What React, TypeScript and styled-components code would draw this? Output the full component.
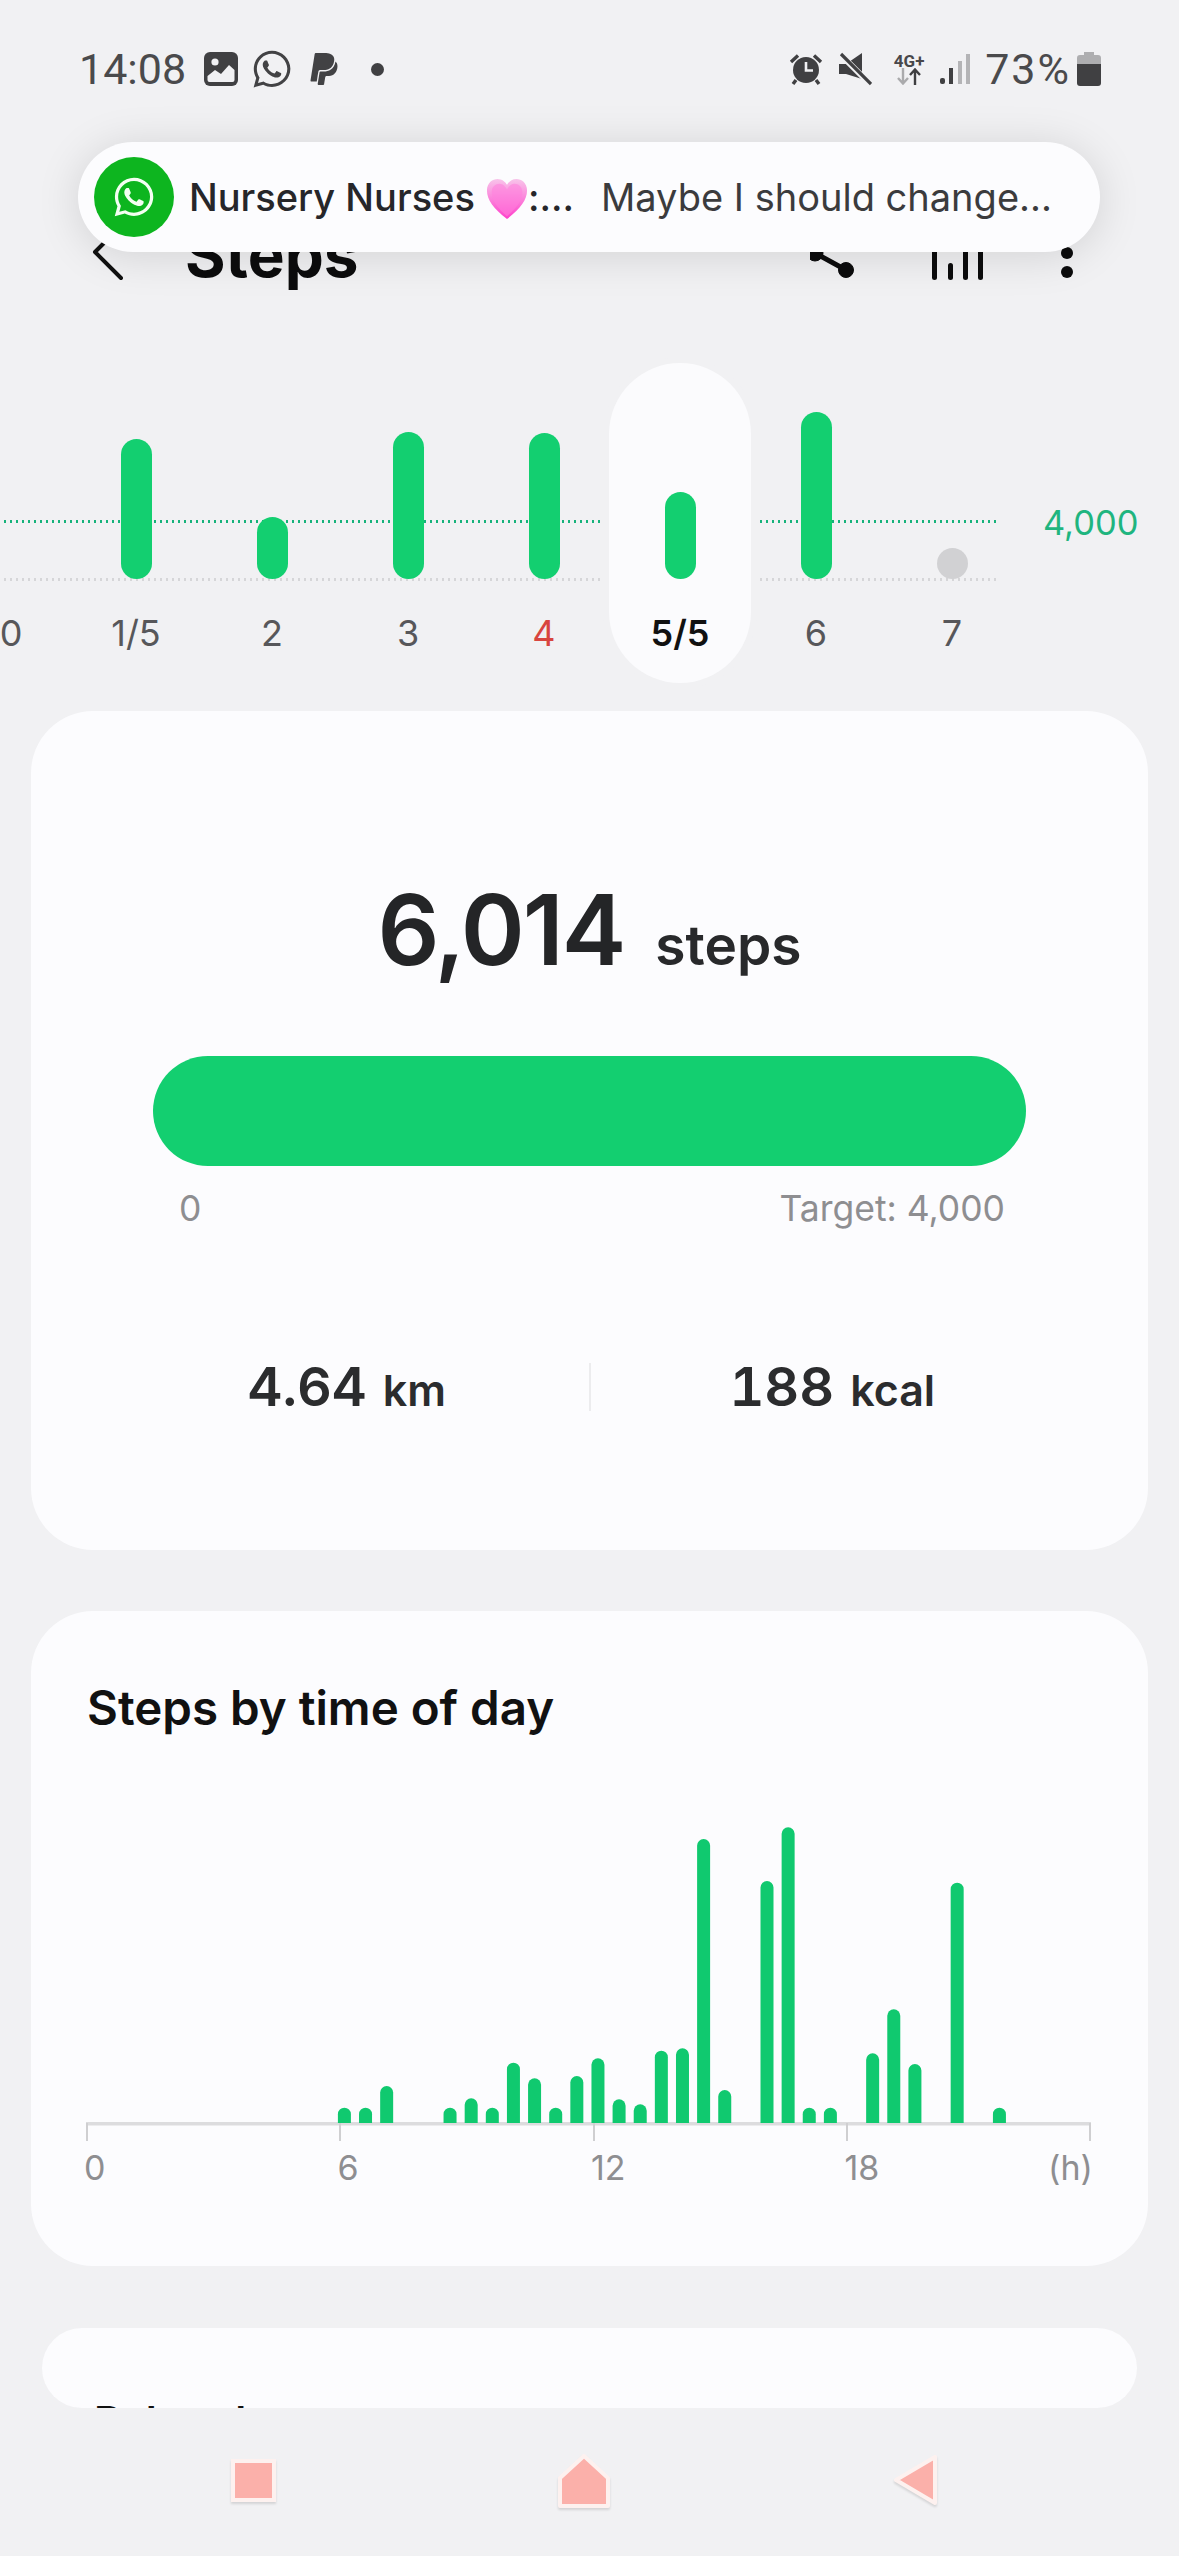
import React from "react";
import styled, { createGlobalStyle } from "styled-components";
import { FaWhatsapp, FaPaypal } from "react-icons/fa";

const Global = createGlobalStyle`
  html, body { margin: 0; padding: 0; background: #f1f1f3; }
  * { box-sizing: border-box; }
`;

const Page = styled.div`
  position: relative;
  width: 1179px;
  height: 2556px;
  overflow: hidden;
  background: #f1f1f3;
  font-family: Inter, "Noto Sans", sans-serif;
  color: #222;
`;

const StatusBar = styled.div`
  height: 100px;
  padding: 50px 78px 0 79px;
  display: flex;
  justify-content: space-between;
  align-items: flex-start;
  color: #404042;
`;
const StatusGroup = styled.div`
  display: flex;
  align-items: center;
  height: 38px;
`;
const StatusText = styled.span<{ $ml?: number; $track?: number }>`
  font-family: Roboto, sans-serif;
  font-size: 43px;
  line-height: 38px;
  font-weight: 400;
  letter-spacing: ${(p) => p.$track ?? 0}px;
  color: #4a4a4c;
  margin-left: ${(p) => p.$ml ?? 0}px;
`;
const StatusIcon = styled.svg<{ $ml: number }>`
  display: block;
  flex: none;
  margin-left: ${(p) => p.$ml}px;
`;
const NetworkLabel = styled.span`
  font-family: Roboto, sans-serif;
  font-size: 17px;
  line-height: 14px;
  font-weight: 700;
  color: #48484a;
  display: block;
  text-align: center;
`;
const NetworkBox = styled.div`
  width: 36px;
  margin-left: 19px;
  display: flex;
  flex-direction: column;
  align-items: center;
`;
const WaStatus = styled(FaWhatsapp)`
  flex: none;
  width: 42px;
  height: 42px;
  margin-left: 13px;
  color: #424244;
`;
const PayStatus = styled(FaPaypal)`
  flex: none;
  width: 30px;
  height: 36px;
  margin-left: 16px;
  color: #424244;
`;
const NoticeDot = styled.span`
  flex: none;
  width: 13px;
  height: 13px;
  border-radius: 50%;
  background: #404042;
  margin-left: 32px;
`;

const Banner = styled.div`
  position: absolute;
  left: 78px;
  top: 142px;
  width: 1022px;
  height: 110px;
  border-radius: 55px;
  background: #fcfcfe;
  box-shadow: 0 4px 44px rgba(0, 0, 0, 0.13);
  display: flex;
  align-items: center;
  padding-left: 16px;
  z-index: 5;
`;
const WaBadge = styled.div`
  flex: none;
  width: 80px;
  height: 80px;
  border-radius: 50%;
  background: #0db51f;
  color: #f4fff2;
  display: flex;
  align-items: center;
  justify-content: center;
  font-size: 44px;
`;
const BannerTitle = styled.span`
  margin-left: 15px;
  font-size: 38px;
  font-weight: 500;
  color: #26262a;
  white-space: nowrap;
`;
const BannerTrail = styled.span`
  font-size: 38px;
  font-weight: 500;
  color: #26262a;
`;
const BannerHeart = styled.svg`
  flex: none;
  margin-left: 11px;
  margin-top: 4px;
`;
const BannerMessage = styled.span`
  margin-left: 27px;
  font-size: 38px;
  font-weight: 400;
  color: #3b3b3d;
  white-space: nowrap;
`;

const Header = styled.header`
  position: relative;
  height: 110px;
  margin-top: 100px;
  display: flex;
  align-items: center;
  padding: 0 79px 0 92px;
`;
const BackIcon = styled.svg`
  flex: none;
  margin-bottom: 6px;
`;
const Title = styled.h1`
  margin: 0 0 0 59px;
  font-size: 62px;
  line-height: 74px;
  font-weight: 700;
  color: #0c0c0d;
`;
const HeaderActions = styled.svg`
  display: block;
  margin-left: auto;
  flex: none;
`;

const WeekStrip = styled.section`
  position: relative;
  height: 320px;
  margin-top: 53px;
  display: flex;
  align-items: flex-start;
  margin-left: -68px;
`;
const GuideLine = styled.div<{ $color: string; $top: number }>`
  position: absolute;
  left: 0;
  top: ${(p) => p.$top}px;
  width: 1064px;
  height: 3px;
  background-image: linear-gradient(to right, ${(p) => p.$color} 38%, transparent 0);
  background-size: 6px 3px;
`;
const Day = styled.div<{ $selected?: boolean }>`
  position: relative;
  flex: none;
  width: ${(p) => (p.$selected ? 142 : 136)}px;
  margin: 0 ${(p) => (p.$selected ? -3 : 0)}px;
  height: 320px;
  display: flex;
  flex-direction: column;
  align-items: center;
  border-radius: 71px;
  background: ${(p) => (p.$selected ? "#fbfbfd" : "transparent")};
  box-shadow: ${(p) => (p.$selected ? "0 0 0 6px #f1f1f3" : "none")};
`;
const BarSlot = styled.div`
  height: 216px;
  display: flex;
  align-items: flex-end;
`;
const DayBar = styled.div<{ $h: number; $muted?: boolean }>`
  width: 31px;
  height: ${(p) => p.$h}px;
  border-radius: 16px;
  background: ${(p) => (p.$muted ? "#d1d1d3" : "#13cf70")};
`;
const DayLabel = styled.span<{ $tone?: "red" | "strong" }>`
  margin-top: 34px;
  font-size: 36px;
  line-height: 40px;
  font-weight: ${(p) => (p.$tone === "strong" ? 600 : 400)};
  color: ${(p) =>
    p.$tone === "red" ? "#d8453f" : p.$tone === "strong" ? "#111" : "#57575a"};
`;
const GoalLabel = styled.span`
  position: relative;
  flex: none;
  margin: 140px 0 0 23px;
  font-size: 34.5px;
  line-height: 40px;
  color: #1fb57f;
`;

const Card = styled.section<{ $h: number; $gap: number }>`
  height: ${(p) => p.$h}px;
  margin: ${(p) => p.$gap}px 31px 0;
  border-radius: 62px;
  background: #fcfcfe;
`;
const MainCard = styled(Card)`
  padding: 169px 122px 0 122px;
`;
const TotalRow = styled.div`
  display: flex;
  justify-content: center;
  align-items: baseline;
  gap: 31px;
`;
const TotalValue = styled.span`
  font-size: 97px;
  line-height: 100px;
  font-weight: 600;
  letter-spacing: -2px;
  color: #242527;
`;
const TotalUnit = styled.span`
  font-size: 55px;
  font-weight: 600;
  color: #28292b;
`;
const Progress = styled.div`
  height: 110px;
  margin-top: 76px;
  border-radius: 55px;
  background: #13cf70;
`;
const ScaleRow = styled.div`
  display: flex;
  justify-content: space-between;
  margin-top: 23px;
  padding: 0 21px 0 26px;
  font-size: 35.5px;
  line-height: 40px;
  color: #8e8e91;
`;
const StatsRow = styled.div`
  display: flex;
  align-items: center;
  margin: 128px -48px 0;
`;
const Stat = styled.div`
  flex: 1;
  display: flex;
  justify-content: center;
  align-items: baseline;
  gap: 16px;
`;
const StatValue = styled.span`
  font-size: 54px;
  line-height: 60px;
  font-weight: 600;
  font-variant-numeric: tabular-nums;
  color: #2b2c2e;
`;
const StatUnit = styled.span`
  font-size: 43px;
  font-weight: 600;
  color: #2b2c2e;
`;
const StatDivider = styled.div`
  flex: none;
  width: 2px;
  height: 48px;
  background: #ececee;
`;

const CardTitle = styled.h2`
  margin: 0;
  padding: 69px 0 0 56px;
  font-size: 47.5px;
  line-height: 56px;
  font-weight: 600;
  color: #111;
`;
const ChartSvg = styled.svg`
  display: block;
  margin-top: 84px;
`;
const HourLabels = styled.div`
  display: flex;
  margin-top: 6px;
  padding: 0 55px 0 53px;
  font-size: 34px;
  line-height: 40px;
  color: #8e8e91;
`;
const HourTick = styled.span`
  flex: none;
  width: 253.5px;
`;
const HourLastTick = styled.span`
  flex: none;
  width: 190px;
`;
const HourUnit = styled.span`
  margin-left: auto;
`;

const PeekCard = styled.section`
  height: 80px;
  margin: 62px 42px 0;
  border-radius: 62px;
  background: #fcfcfe;
  overflow: hidden;
  padding: 69px 0 0 52px;
  font-size: 42px;
  line-height: 50px;
  font-weight: 600;
  color: #111;
`;

const NavBar = styled.nav`
  display: flex;
  gap: 270px;
  margin-top: 42px;
  padding-left: 224px;
`;
const NavIcon = styled.svg`
  display: block;
  flex: none;
  filter: drop-shadow(0 2px 1px rgba(0, 0, 0, 0.12));
`;

const days = [
  { label: "30", h: 0 },
  { label: "1/5", h: 140 },
  { label: "2", h: 62 },
  { label: "3", h: 147 },
  { label: "4", h: 146, tone: "red" as const },
  { label: "5/5", h: 87, tone: "strong" as const, selected: true },
  { label: "6", h: 167 },
  { label: "7", h: 31, muted: true },
];

const hourBars: [number, number][] = [
  [12, 983], [13, 983], [14, 918], [17, 983], [18, 955], [19, 983], [20, 848],
  [21, 895], [22, 983], [23, 888], [24, 835], [25, 958], [26, 973], [27, 812],
  [28, 805], [29, 177], [30, 930], [32, 303], [33, 142], [34, 983], [35, 983],
  [37, 820], [38, 688], [39, 852], [41, 308], [43, 983],
];

const HourChart = () => (
  <ChartSvg width={1117} height={322} viewBox="31 1820 1117 322">
    <rect x="86" y="2122" width="1005" height="3.5" fill="#dcdcde" />
    {[87, 340, 594, 847, 1090].map((x) => (
      <rect key={x} x={x - 1} y="2123" width="2" height="18" fill="#cfcfd1" />
    ))}
    {hourBars.map(([i, top]) => {
      const cx = 344.4 + 21.13 * (i - 12);
      const y = 1780 + top / 3;
      return (
        <path
          key={i}
          d={`M${cx - 6.5} 2123 V${y + 6.5} a6.5 6.5 0 0 1 13 0 V2123 Z`}
          fill="#10c96f"
        />
      );
    })}
  </ChartSvg>
);

export default function App() {
  return (
    <Page>
      <Global />
      <StatusBar>
        <StatusGroup>
          <StatusText>14:08</StatusText>
          <StatusIcon $ml={18} width="34" height="34" viewBox="0 0 34 34">
            <rect width="34" height="34" rx="6" fill="#404042" />
            <circle cx="11" cy="10" r="3.6" fill="#f1f1f3" />
            <path d="M3.5 28 V24 L11 18 L17 22 L25 13 L30.5 18 V28 a2 2 0 0 1-2 2 H5.5 a2 2 0 0 1-2-2Z" fill="#f1f1f3" />
          </StatusIcon>
          <WaStatus />
          <PayStatus />
          <NoticeDot />
        </StatusGroup>
        <StatusGroup>
          <StatusIcon $ml={0} width="34" height="34" viewBox="0 0 34 34">
            <circle cx="17" cy="18" r="13" fill="#404042" />
            <path d="M17 10 V18.5 H24" fill="none" stroke="#f1f1f3" strokeWidth="2.6" />
            <path d="M2 10 L9 3.5 M32 10 L25 3.5 M7 28 L4 32 M27 28 L30 32" stroke="#404042" strokeWidth="3.4" />
          </StatusIcon>
          <StatusIcon $ml={15} width="34" height="34" viewBox="0 0 34 34">
            <path d="M1 12 H8 L24 1 V27 L8 22 H1Z" fill="#404042" />
            <path d="M3 3 L32 32" stroke="#f1f1f3" strokeWidth="6" />
            <path d="M3 2 L33 32" stroke="#404042" strokeWidth="3.2" />
          </StatusIcon>
          <NetworkBox>
            <NetworkLabel>4G+</NetworkLabel>
            <svg width="30" height="17" viewBox="0 0 30 17">
              <path d="M9 0 V15 M4 10 L9 15.5 L14 10" fill="none" stroke="#aaaaac" strokeWidth="2.4" />
              <path d="M21 17 V2 M16 7 L21 1.5 L26 7" fill="none" stroke="#3e3e40" strokeWidth="2.4" />
            </svg>
          </NetworkBox>
          <StatusIcon $ml={13} width="32" height="32" viewBox="0 0 32 32">
            <rect x="0" y="25" width="5" height="6" rx="2" fill="#404042" />
            <rect x="9" y="15" width="4" height="16" fill="#404042" />
            <rect x="18" y="8" width="4" height="23" fill="#b4b4b6" />
            <rect x="26" y="1" width="4" height="30" fill="#b4b4b6" />
          </StatusIcon>
          <StatusText $ml={13} $track={2}>73%</StatusText>
          <StatusIcon $ml={6} width="24" height="34" viewBox="0 0 24 34">
            <path d="M7 0 H17 V3 H21 a3 3 0 0 1 3 3 V12 H0 V6 a3 3 0 0 1 3-3 H7Z" fill="#aeaeb0" />
            <path d="M0 12 H24 V31 a3 3 0 0 1-3 3 H3 a3 3 0 0 1-3-3Z" fill="#404042" />
          </StatusIcon>
        </StatusGroup>
      </StatusBar>

      <Banner>
        <WaBadge>
          <FaWhatsapp />
        </WaBadge>
        <BannerTitle>Nursery Nurses</BannerTitle>
        <BannerHeart width="42" height="44" viewBox="0 0 44 44">
          <defs>
            <linearGradient id="heart" x1="0" y1="0" x2="0" y2="1">
              <stop offset="0" stopColor="#f8c4ea" />
              <stop offset="1" stopColor="#ff3fcb" />
            </linearGradient>
          </defs>
          <path d="M22 43 C8 32 1 23 1 13 C1 5 7 1 12 1 C17 1 20 4 22 7 C24 4 27 1 32 1 C37 1 43 5 43 13 C43 23 36 32 22 43Z" fill="url(#heart)" />
          <path d="M22 40 C11 31 6 23 6 15 C6 9 10 6 14 6 C18 6 20 9 22 12 C24 9 26 6 30 6 C34 6 38 9 38 15 C38 23 33 31 22 40Z" fill="#ff7fdd" opacity="0.55" />
        </BannerHeart>
        <BannerTrail>:...</BannerTrail>
        <BannerMessage>Maybe I should change...</BannerMessage>
      </Banner>

      <Header>
        <BackIcon width="34" height="64" viewBox="0 0 34 64">
          <path d="M29 6 L3 32 L29 58" fill="none" stroke="#111" strokeWidth="4" strokeLinecap="round" strokeLinejoin="round" />
        </BackIcon>
        <Title>Steps</Title>
        <HeaderActions width="290" height="100" viewBox="0 0 290 100">
          <g fill="#0c0c0d" stroke="#0c0c0d">
            <path d="M36 28 L5 48 L36 65" fill="none" strokeWidth="5" />
            <circle cx="36" cy="28" r="8" />
            <circle cx="5" cy="48" r="8" />
            <circle cx="36" cy="65" r="7.5" />
          </g>
          <g fill="#0c0c0d">
            <rect x="122" y="20" width="5" height="55" rx="2.5" />
            <rect x="138" y="58" width="5" height="17" rx="2.5" />
            <rect x="153" y="20" width="5" height="55" rx="2.5" />
            <rect x="168" y="20" width="5" height="55" rx="2.5" />
            <circle cx="257" cy="29" r="6" />
            <circle cx="257" cy="48" r="6" />
            <circle cx="257" cy="67" r="6" />
          </g>
        </HeaderActions>
      </Header>

      <WeekStrip>
        <GuideLine $color="#16b27a" $top={157} />
        <GuideLine $color="#d6d6d8" $top={215} />
        {days.map((d) => (
          <Day key={d.label} $selected={d.selected}>
            <BarSlot>{d.h > 0 && <DayBar $h={d.h} $muted={d.muted} />}</BarSlot>
            <DayLabel $tone={d.tone}>{d.label}</DayLabel>
          </Day>
        ))}
        <GoalLabel>4,000</GoalLabel>
      </WeekStrip>

      <MainCard $h={839} $gap={28}>
        <TotalRow>
          <TotalValue>6,014</TotalValue>
          <TotalUnit>steps</TotalUnit>
        </TotalRow>
        <Progress />
        <ScaleRow>
          <span>0</span>
          <span>Target: 4,000</span>
        </ScaleRow>
        <StatsRow>
          <Stat>
            <StatValue>4.64</StatValue>
            <StatUnit>km</StatUnit>
          </Stat>
          <StatDivider />
          <Stat>
            <StatValue>188</StatValue>
            <StatUnit>kcal</StatUnit>
          </Stat>
        </StatsRow>
      </MainCard>

      <Card $h={655} $gap={61}>
        <CardTitle>Steps by time of day</CardTitle>
        <HourChart />
        <HourLabels>
          <HourTick>0</HourTick>
          <HourTick>6</HourTick>
          <HourTick>12</HourTick>
          <HourLastTick>18</HourLastTick>
          <HourUnit>(h)</HourUnit>
        </HourLabels>
      </Card>

      <PeekCard>Related content</PeekCard>

      <NavBar>
        <NavIcon width="60" height="64" viewBox="0 0 60 64">
          <rect x="9" y="11" width="41" height="39" fill="#fbb0aa" stroke="#fdf1ef" strokeWidth="4" />
        </NavIcon>
        <NavIcon width="60" height="64" viewBox="0 0 60 64">
          <path d="M30 6 L54 28 V56 H6 V28Z" fill="#fbb0aa" stroke="#fdf1ef" strokeWidth="4" strokeLinejoin="round" />
        </NavIcon>
        <NavIcon width="60" height="64" viewBox="0 0 60 64">
          <path d="M12 30 L51 7 V53 Z" fill="#fbb0aa" stroke="#fdf1ef" strokeWidth="4" strokeLinejoin="round" />
        </NavIcon>
      </NavBar>
    </Page>
  );
}
